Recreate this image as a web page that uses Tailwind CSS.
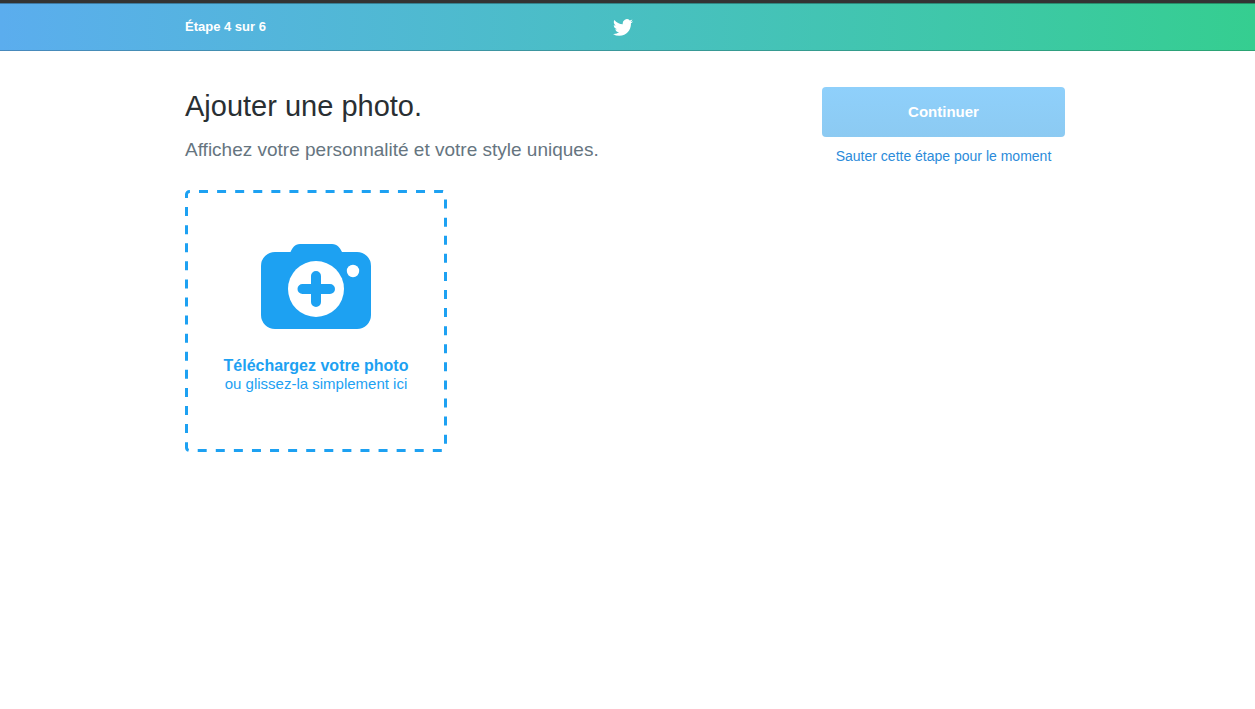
<!DOCTYPE html>
<html lang="fr">
<head>
<meta charset="utf-8">
<meta name="viewport" content="width=device-width, initial-scale=1">
<title>Ajouter une photo</title>
<script src="https://cdn.jsdelivr.net/npm/@tailwindcss/browser@4"></script>
</head>
<body class="min-h-screen bg-white font-['Liberation_Sans',Arial,sans-serif]">
<header class="border-t-3 border-[#333333]">
  <div class="h-12 border-t border-b border-t-black/30 border-b-black/20 bg-linear-to-r from-[#5badee] to-[#35ce90] pr-[5px]">
    <div class="mx-auto grid h-full max-w-[880px] grid-cols-[1fr_auto_1fr] items-center">
      <p class="text-[13px] leading-5 font-bold text-white">Étape 4 sur 6</p>
      <a href="#" aria-label="Twitter" class="mr-1">
        <svg class="h-[17px] w-5" viewBox="0 2 24 20" preserveAspectRatio="none" fill="#fff" aria-hidden="true"><path d="M23.954 4.569a10 10 0 0 1-2.825.775 4.958 4.958 0 0 0 2.163-2.723c-.951.555-2.005.959-3.127 1.184a4.92 4.92 0 0 0-8.384 4.482C7.691 8.094 4.066 6.13 1.64 3.161a4.822 4.822 0 0 0-.666 2.475c0 1.71.87 3.213 2.188 4.096a4.904 4.904 0 0 1-2.228-.616v.061a4.923 4.923 0 0 0 3.946 4.827 4.996 4.996 0 0 1-2.212.085 4.937 4.937 0 0 0 4.604 3.417 9.868 9.868 0 0 1-6.102 2.105c-.39 0-.779-.023-1.17-.067a13.995 13.995 0 0 0 7.557 2.209c9.054 0 13.999-7.496 13.999-13.986 0-.209 0-.42-.015-.63a9.936 9.936 0 0 0 2.46-2.548z"/></svg>
      </a>
    </div>
  </div>
</header>
<main class="pr-[5px]">
  <div class="mx-auto flex max-w-[880px] items-start justify-between gap-8 pt-9">
    <section>
      <h1 class="text-[29px] leading-[38px] text-[#292f33]">Ajouter une photo.</h1>
      <p class="mt-[11px] text-[19px] leading-7 text-[#66757f]">Affichez votre personnalité et votre style uniques.</p>
      <button type="button" class="relative mt-[26px] flex h-[262px] w-[262px] cursor-pointer flex-col items-center pt-[54px] text-[#1da1f2]">
        <svg class="absolute inset-0 h-full w-full" viewBox="0 0 262 262" fill="none" aria-hidden="true"><rect x="1.5" y="1.5" width="259" height="259" rx="3" stroke="currentColor" stroke-width="3" stroke-dasharray="9 9.085" stroke-dashoffset="-9.5"/></svg>
        <svg class="h-[85px] w-[110px]" viewBox="0 0 110 85" aria-hidden="true">
          <path fill="currentColor" d="M14 8H29.500C31.500 4 33.500 0 39 0H71C76.500 0 79 4 81 8H96A14 14 0 0 1 110 22V71A14 14 0 0 1 96 85H14A14 14 0 0 1 0 71V22A14 14 0 0 1 14 8Z"/>
          <circle cx="55" cy="45" r="28" fill="#fff"/>
          <circle cx="92" cy="27" r="6.200" fill="#fff"/>
          <path d="M55 32V58M41.500 45H69" stroke="currentColor" stroke-width="10" stroke-linecap="round"/>
        </svg>
        <span class="mt-7 text-base leading-[18px] font-bold">Téléchargez votre photo</span>
        <span class="text-[15px] leading-[18px]">ou glissez-la simplement ici</span>
      </button>
    </section>
    <aside class="flex w-[243px] flex-col items-center">
      <button type="button" disabled class="h-[50px] w-full rounded-sm bg-linear-to-b from-[#8fd0fb] to-[#8ccaf2] text-[15px] font-bold text-white">Continuer</button>
      <a href="#" class="mt-[9px] text-sm leading-5 text-[#2b8bda]">Sauter cette étape pour le moment</a>
    </aside>
  </div>
</main>
</body>
</html>
